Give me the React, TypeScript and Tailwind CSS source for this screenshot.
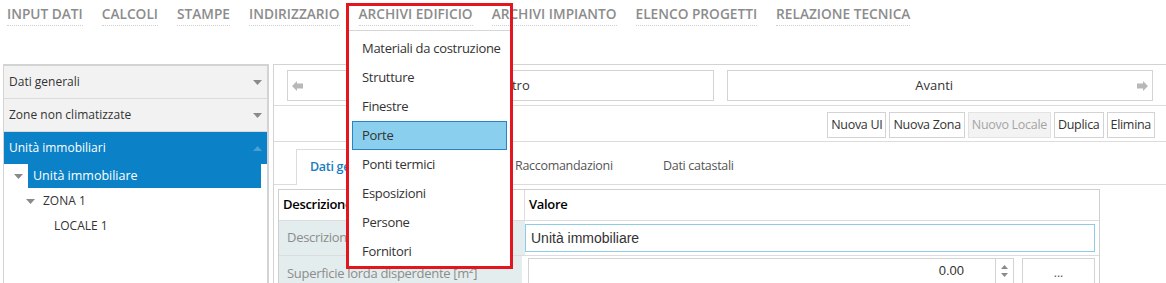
import React from "react";

const navItems = [
  "INPUT DATI",
  "CALCOLI",
  "STAMPE",
  "INDIRIZZARIO",
  "ARCHIVI EDIFICIO",
  "ARCHIVI IMPIANTO",
  "ELENCO PROGETTI",
  "RELAZIONE TECNICA",
];

const menuItems = [
  "Materiali da costruzione",
  "Strutture",
  "Finestre",
  "Porte",
  "Ponti termici",
  "Esposizioni",
  "Persone",
  "Fornitori",
];

function Caret({ up = false, className = "" }: { up?: boolean; className?: string }) {
  return (
    <svg width="9" height="5" viewBox="0 0 9 5" className={className}>
      {up ? <polygon points="0,5 9,5 4.5,0" fill="currentColor" /> : <polygon points="0,0 9,0 4.5,5" fill="currentColor" />}
    </svg>
  );
}

function BlockArrow({ dir }: { dir: "left" | "right" }) {
  return (
    <svg width="11" height="10" viewBox="0 0 11 10" className="text-[#b8b8b8]">
      {dir === "left" ? (
        <polygon points="0,5 5,0 5,2.5 11,2.5 11,7.5 5,7.5 5,10" fill="currentColor" />
      ) : (
        <polygon points="11,5 6,0 6,2.5 0,2.5 0,7.5 6,7.5 6,10" fill="currentColor" />
      )}
    </svg>
  );
}

export default function App() {
  return (
    <div className="relative w-[1166px] h-[283px] overflow-hidden bg-white font-['Open_Sans',sans-serif] text-[#333]">
      {/* top menu */}
      <div className="flex h-[64px] pl-[7px] pt-[5px] gap-[19px] items-start">
        {navItems.map((n) => (
          <span
            key={n}
            className="text-[13.7px] font-semibold leading-[18px] text-[#8c8c8c] border-b border-dotted border-[#cfcfcf] pb-[2px]"
          >
            {n}
          </span>
        ))}
      </div>

      <div className="flex h-[219px]">
        {/* left accordion */}
        <div className="ml-[3px] w-[266px] border-l border-t-2 border-r-2 border-[#d3d3d3] flex flex-col">
          <div className="h-[33px] flex items-center justify-between pl-[5px] pr-[5px] bg-[#f2f2f2] border-b border-[#dadada] text-[12px]">
            <span>Dati generali</span>
            <Caret className="text-[#8a8a8a]" />
          </div>
          <div className="h-[33px] flex items-center justify-between pl-[5px] pr-[5px] bg-[#f2f2f2] border-b border-[#dadada] text-[12px]">
            <span>Zone non climatizzate</span>
            <Caret className="text-[#8a8a8a]" />
          </div>
          <div className="h-[32px] flex items-center justify-between pl-[5px] pr-[5px] bg-[#0b82c7] text-white text-[12px]">
            <span>Unità immobiliari</span>
            <Caret up className="text-[#4c9fd3]" />
          </div>
          <div className="flex flex-col text-[12px]">
            <div className="flex items-center h-[24px]">
              <Caret className="ml-[10px] mr-[5px] text-[#8a8a8a]" />
              <div className="flex-1 mr-[6px] h-[24px] bg-[#0b82c7] text-white text-[12.5px] pl-[5px] flex items-center">
                Unità immobiliare
              </div>
            </div>
            <div className="flex items-center h-[26px]">
              <Caret className="ml-[22px] mr-[8px] text-[#8a8a8a]" />
              <span>ZONA 1</span>
            </div>
            <div className="flex items-center h-[24px] pl-[50px]">LOCALE 1</div>
          </div>
        </div>

        {/* right content */}
        <div className="ml-[4px] flex-1 border-l border-t border-[#d3d3d3] flex flex-col">
          <div className="flex gap-[13px] px-[13px] pt-[5px] pb-[4px] border-b border-[#dcdcdc]">
            <div className="flex-1 h-[31px] border border-[#d3d3d3] flex items-center px-[4px] text-[13px]">
              <BlockArrow dir="left" />
              <span className="flex-1 text-center">Indietro</span>
            </div>
            <div className="flex-1 h-[31px] border border-[#d3d3d3] flex items-center px-[4px] text-[13px]">
              <span className="flex-1 text-center">Avanti</span>
              <BlockArrow dir="right" />
            </div>
          </div>
          <div className="flex justify-end gap-[3px] pr-[11px] pt-[6px] pb-[3px] border-b border-[#dcdcdc] text-[12.5px]">
            <span className="h-[26px] px-[3px] border border-[#d3d3d3] flex items-center tracking-[-0.3px]">Nuova UI</span>
            <span className="h-[26px] px-[3px] border border-[#d3d3d3] flex items-center tracking-[-0.3px]">Nuova Zona</span>
            <span className="h-[26px] px-[3px] border border-[#e3e3e3] bg-[#f3f3f3] text-[#a5a5a5] flex items-center tracking-[-0.3px]">Nuovo Locale</span>
            <span className="h-[26px] px-[3px] border border-[#d3d3d3] flex items-center tracking-[-0.3px]">Duplica</span>
            <span className="h-[26px] px-[3px] border border-[#d3d3d3] flex items-center tracking-[-0.3px]">Elimina</span>
          </div>

          {/* tabs */}
          <div className="flex mt-[7px] pl-[22px] h-[36px] border-b border-[#dcdcdc] text-[12.5px]">
            <div className="w-[200px] h-[36px] bg-white border-t border-l border-r border-[#dcdcdc] pl-[13px] flex items-center font-semibold text-[#1a7cc2] tracking-[-0.3px]">
              Dati generali
            </div>
            <div className="w-[148px] pl-[19px] flex items-center text-[#555] tracking-[-0.3px]">Raccomandazioni</div>
            <div className="w-[148px] pl-[19px] flex items-center text-[#555] tracking-[-0.3px]">Dati catastali</div>
          </div>

          {/* table */}
          <div className="ml-[4px] mt-[4px] w-[822px] border-l border-t border-r border-[#cfcfcf] flex flex-col">
            <div className="flex h-[31px] border-b border-[#dcdcdc] text-[13px] font-semibold text-black tracking-[-0.3px]">
              <div className="w-[246px] border-r border-[#dcdcdc] pl-[4px] flex items-center">Descrizione</div>
              <div className="flex-1 pl-[4px] flex items-center">Valore</div>
            </div>
            <div className="flex h-[35px] border-b border-[#dcdcdc]">
              <div className="w-[246px] bg-[#e4eded] pl-[8px] flex items-center text-[13px] text-[#8c8c8c] tracking-[-0.3px]">
                Descrizione
              </div>
              <div className="flex-1 pr-[4px] pt-[3px]">
                <div className="h-[28px] border border-[#8fcbe6] flex items-center pl-[5px] font-['Liberation_Sans',sans-serif] text-[14px] text-[#333]">
                  Unità immobiliare
                </div>
              </div>
            </div>
            <div className="flex h-[35px]">
              <div className="w-[246px] bg-[#e4eded] pl-[8px] pt-[8px] flex items-start text-[13px] text-[#8c8c8c] tracking-[-0.3px]">
                Superficie lorda disperdente [m²]
              </div>
              <div className="flex-1 flex pl-[6px] pr-[4px] pt-[2px] gap-[8px]">
                <div className="w-[486px] h-[26px] border border-[#d3d3d3] flex">
                  <div className="flex-1 flex items-center justify-end pr-[31px] font-['Liberation_Sans',sans-serif] text-[13px]">0.00</div>
                  <div className="w-[18px] border-l border-[#d3d3d3] flex flex-col items-center justify-center gap-[4px]">
                    <svg width="7" height="4" viewBox="0 0 7 4"><polygon points="0,4 7,4 3.5,0" fill="#8a8a8a" /></svg>
                    <svg width="7" height="4" viewBox="0 0 7 4"><polygon points="0,0 7,0 3.5,4" fill="#8a8a8a" /></svg>
                  </div>
                </div>
                <div className="w-[73px] h-[26px] border border-[#d3d3d3] flex items-center justify-center text-[12px] text-[#555] leading-none pt-[3px]">
                  ...
                </div>
              </div>
            </div>
          </div>
        </div>
      </div>

      {/* dropdown menu */}
      <div className="absolute left-[349px] top-[30px] w-[161px] h-[237px] bg-white border-t border-[#d6d6d6] pt-[3px] px-[3px]">
        {menuItems.map((m) => (
          <div
            key={m}
            className={
              m === "Porte"
                ? "h-[29px] flex items-center pl-[9px] text-[13px] tracking-[-0.3px] bg-[#8ad0ee] border border-[#2a84c4]"
                : "h-[29px] flex items-center pl-[10px] text-[13px] tracking-[-0.3px] text-[#333]"
            }
          >
            {m}
          </div>
        ))}
      </div>
      <div className="absolute left-[346px] top-[3px] w-[167px] h-[266px] border-[3px] border-[#e3161f] pointer-events-none" />
    </div>
  );
}
